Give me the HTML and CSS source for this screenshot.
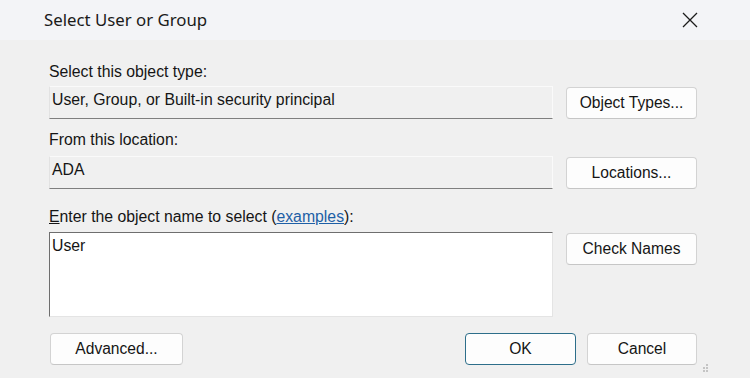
FILE: index.html
```html
<!DOCTYPE html>
<html>
<head>
<meta charset="utf-8">
<link rel="stylesheet" href="styles.css">
</head>
<body>
<div class="dialog">
  <div class="titlebar">
    <span class="title">Select User or Group</span>
    <svg class="close" width="16" height="16" viewBox="0 0 16 16"><path d="M1 1 L15 15 M15 1 L1 15" stroke="#1b1b1b" stroke-width="1.3" fill="none"/></svg>
  </div>
  <div class="content">
    <div class="label l1">Select this object type:</div>
    <div class="row">
      <div class="field">User, Group, or Built-in security principal</div>
      <button class="btn">Object Types...</button>
    </div>
    <div class="label l2">From this location:</div>
    <div class="row">
      <div class="field">ADA</div>
      <button class="btn">Locations...</button>
    </div>
    <div class="label l3"><u>E</u>nter the object name to select (<a class="link">examples</a>):</div>
    <div class="row">
      <div class="textarea">User</div>
      <button class="btn">Check Names</button>
    </div>
    <div class="footer">
      <button class="btn adv">Advanced...</button>
      <div class="spacer"></div>
      <button class="btn ok">OK</button>
      <button class="btn cancel">Cancel</button>
    </div>
  </div>
  <svg class="grip" width="8" height="8" viewBox="0 0 8 8">
    <rect x="5" y="0" width="2" height="2" fill="#c4c4c4"/>
    <rect x="5" y="3" width="2" height="2" fill="#c4c4c4"/>
    <rect x="2" y="3" width="2" height="2" fill="#c4c4c4"/>
    <rect x="5" y="6" width="2" height="2" fill="#c4c4c4"/>
    <rect x="2" y="6" width="2" height="2" fill="#c4c4c4"/>
  </svg>
</div>
</body>
</html>
```
FILE: styles.css
```css
* { box-sizing: border-box; }
html, body {
  margin: 0;
  padding: 0;
  background: #f0f0f0;
}
body {
  width: 750px;
  height: 378px;
  overflow: hidden;
  font-family: "Liberation Sans", Arial, sans-serif;
  font-size: 15.8px;
  color: #151515;
}
.dialog {
  position: relative;
  width: 750px;
  height: 378px;
}
.titlebar {
  height: 40px;
  background: #f3f4f7;
  display: flex;
  align-items: center;
  padding: 0 52px 0 44px;
}
.title {
  flex: 1;
  font-family: "Noto Sans", "Open Sans", sans-serif;
  font-size: 16.8px;
  color: #1a1a1a;
  line-height: 20px;
  margin-top: -1px;
}
.close {
  display: block;
  margin-top: -1px;
}
.content {
  padding: 0 53px 0 49px;
}
.label {
  height: 17px;
  line-height: 17px;
  white-space: nowrap;
}
.l1 { margin-top: 23px; margin-bottom: 6px; }
.l2 { margin-top: 12px; margin-bottom: 8px; }
.l3 { margin-top: 19px; margin-bottom: 7px; }
.link {
  color: #1d5fa6;
  text-decoration: underline;
}
.row {
  display: flex;
  gap: 13px;
  align-items: flex-start;
}
.field {
  width: 504px;
  height: 33px;
  padding: 4px 3px 0 2px;
  line-height: 17px;
  background: #f0f0f0;
  border-top: 1px solid #fafafa;
  border-left: 1px solid #e2e2e2;
  border-right: 1px solid #fafafa;
  border-bottom: 1px solid #7f7f7f;
}
.textarea {
  width: 504px;
  height: 85px;
  padding: 4px 3px 0 2px;
  line-height: 17px;
  background: #ffffff;
  border-top: 1px solid #6e6e6e;
  border-left: 1px solid #6e6e6e;
  border-right: 1px solid #e4e4e4;
  border-bottom: 1px solid #e4e4e4;
}
.btn {
  font-family: "Liberation Sans", Arial, sans-serif;
  font-size: 15.6px;
  color: #151515;
  width: 131px;
  height: 32px;
  padding: 0;
  background: #fdfdfd;
  border: 1px solid #d3d3d3;
  border-bottom-color: #c6c6c6;
  border-radius: 4px;
  line-height: 30px;
  text-align: center;
  margin-top: 1px;
}
.footer {
  display: flex;
  align-items: center;
  margin-top: 16px;
  padding-left: 1px;
}
.footer .btn { margin-top: 0; }
.adv { width: 133px; }
.spacer { flex: 1; }
.ok {
  width: 111px;
  border: 1px solid #2d6e8a;
  margin-right: 11px;
}
.cancel { width: 110px; }
.grip {
  position: absolute;
  left: 701px;
  top: 364px;
}
```
